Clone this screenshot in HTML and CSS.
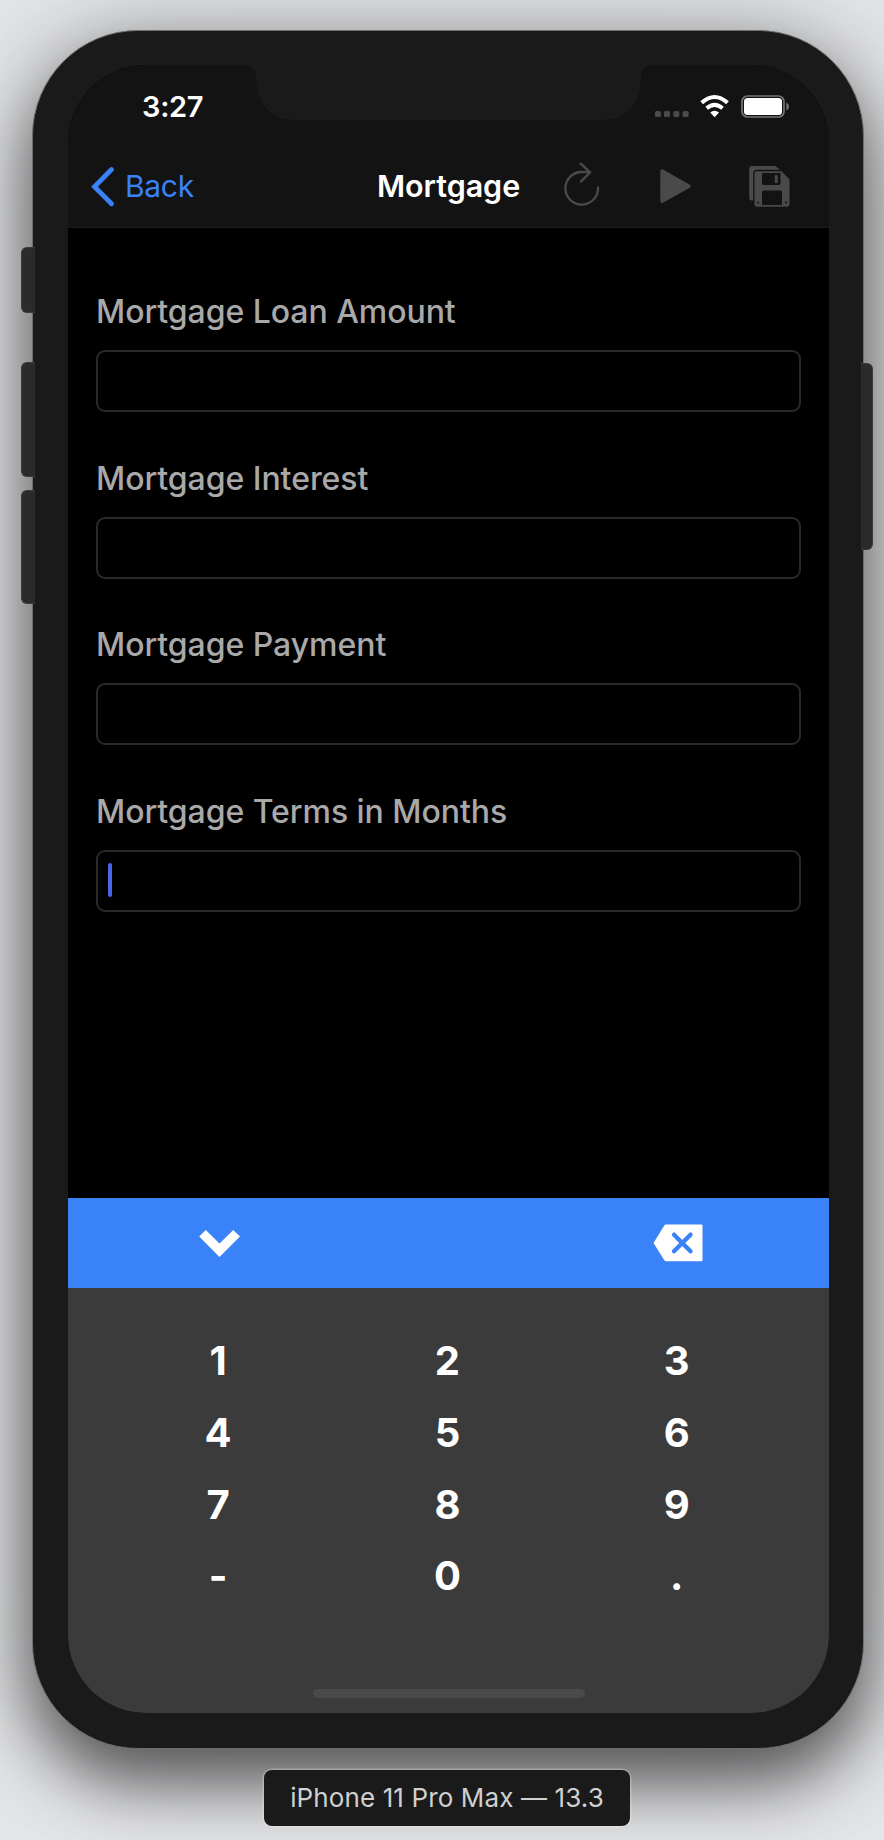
FILE: index.html
```html
<!DOCTYPE html>
<html lang="en">
<head>
<meta charset="utf-8">
<title>Mortgage</title>
<link rel="stylesheet" href="styles.css">
</head>
<body>
<div class="device">
  <span class="side-button mute"></span>
  <span class="side-button volume-up"></span>
  <span class="side-button volume-down"></span>
  <span class="side-button power"></span>
  <main class="screen">
    <svg class="notch" width="409" height="56" viewBox="0 0 409 56"><path d="M0 0C8 0 12 4 12 12C12 40 28 55 52 55H357C381 55 397 40 397 12C397 4 401 0 409 0Z"/></svg>
    <header class="top">
      <div class="status">
        <span class="time">3:27</span>
        <svg class="status-icons" width="136" height="26" viewBox="654 93 136 26">
          <g fill="#4a4a4a"><rect x="655" y="111" width="6" height="6" rx="1.5"/><rect x="664" y="111" width="6" height="6" rx="1.5"/><rect x="673.3" y="111" width="6" height="6" rx="1.5"/><rect x="682.6" y="111" width="6" height="6" rx="1.5"/></g>
          <g fill="none" stroke="#fff" stroke-width="4"><path d="M701.7 102.8Q714.6 91.2 727.5 102.8"/><path d="M706.7 108.2Q714.6 101.4 722.5 108.2"/></g>
          <path d="M710.2 112.6Q714.6 109 719 112.6L714.6 117.2Z" fill="#fff"/>
          <rect x="742" y="96" width="42" height="21" rx="5.5" fill="none" stroke="#777" stroke-width="1.7"/>
          <rect x="744" y="98" width="38" height="17" rx="3.5" fill="#fff"/>
          <path d="M786.3 102.5Q789 103.5 789 106.5T786.3 110.5Z" fill="#777"/>
        </svg>
      </div>
      <nav class="nav">
        <a class="back">
          <svg width="24" height="42" viewBox="91 166 24 42"><path d="M111.5 169.5L94.5 186.7L111.5 203.7" fill="none" stroke="#3a82f7" stroke-width="4.8" stroke-linecap="round"/></svg>
          <span class="back-text">Back</span>
        </a>
        <h1 class="title">Mortgage</h1>
        <svg class="tool reload" width="38" height="50" viewBox="563 162 38 50"><path d="M598 187.5A16.3 16.3 0 1 1 581.7 172H590M580.8 163.6L590.2 172.4L580.8 181.6" fill="none" stroke="#4a4a4a" stroke-width="2.3" stroke-linecap="round" stroke-linejoin="round"/></svg>
        <svg class="tool play" width="32" height="50" viewBox="660 162 32 50"><path d="M662 171V201.3L689 186.2Z" fill="#4a4a4a" stroke="#4a4a4a" stroke-width="3.4" stroke-linejoin="round"/></svg>
        <svg class="tool save" width="42" height="50" viewBox="749 162 42 50">
          <path d="M751.5 166H775.5L780 169.8H757Q753.2 169.8 753.2 174V200.4H751.2Q749.2 200.4 749.2 198V168.5Q749.2 166 751.5 166Z" fill="#4a4a4a"/>
          <path fill-rule="evenodd" d="M756.5 171.3H781.5L789.5 179.5V204.5Q789.5 206.7 787 206.7H756.7Q754.5 206.7 754.5 204.5V173.5Q754.5 171.3 756.5 171.3ZM762 173V183.5Q762 185 763.5 185H779Q780.5 185 780.5 183.5V173ZM763.5 190.5Q762 190.5 762 192V205H782V192Q782 190.5 780.5 190.5Z" fill="#4a4a4a"/>
          <rect x="774.8" y="175" width="3" height="8" rx=".8" fill="#4a4a4a"/>
          <g fill="#131313"><circle cx="758" cy="202.5" r="1.1"/><circle cx="786" cy="202.5" r="1.1"/></g>
        </svg>
      </nav>
    </header>
    <section class="form">
      <label class="field"><span class="field-label">Mortgage Loan Amount</span><span class="input"></span></label>
      <label class="field"><span class="field-label">Mortgage Interest</span><span class="input"></span></label>
      <label class="field"><span class="field-label">Mortgage Payment</span><span class="input"></span></label>
      <label class="field"><span class="field-label">Mortgage Terms in Months</span><span class="input"><i class="caret"></i></span></label>
    </section>
    <section class="keyboard">
      <div class="accessory">
        <svg width="42" height="30" viewBox="198 1228 42 30"><path d="M205.8 1230L219.5 1243.6L233.3 1230L240 1236.5L219.5 1257L199.2 1236.5Z" fill="#fff"/></svg>
        <svg width="50" height="38" viewBox="652.5 1224.5 50 38"><path d="M665 1225H701Q702 1225 702 1226V1260.7Q702 1261.7 701 1261.7H665Q664 1261.3 663.5 1260.3L653 1243.5L663.5 1226.5Q664 1225.3 665 1225Z" fill="#fff"/><path d="M673.5 1235.2L690 1251.7M690 1235.2L673.5 1251.7" stroke="#3a82f7" stroke-width="4.4" stroke-linecap="round"/></svg>
      </div>
      <div class="keys">
        <span>1</span><span>2</span><span>3</span>
        <span>4</span><span>5</span><span>6</span>
        <span>7</span><span>8</span><span>9</span>
        <span>-</span><span>0</span><span>.</span>
      </div>
      <div class="home-indicator"></div>
    </section>
  </main>
</div>
<div class="caption"><span>iPhone 11 Pro Max — 13.3</span></div>
</body>
</html>
```
FILE: styles.css
```css
* { box-sizing: border-box; }
html { background: #e4e5e7; }
body {
  margin: 0;
  width: 884px;
  height: 1840px;
  padding: 30px 0 0 32px;
  overflow: hidden;
  font-family: Inter, "Liberation Sans", sans-serif;
  color: #fff;
}
.device {
  position: relative;
  width: 832px;
  height: 1719px;
  padding: 34px 35px 34px 35px;
  border: 1px solid #6e6f70;
  border-radius: 106px;
  background: #1a1a1a;
  box-shadow: 0 34px 64px rgba(0, 0, 0, .52), 0 10px 100px rgba(0, 0, 0, .3);
}
.side-button {
  position: absolute;
  left: -12px;
  width: 14px;
  border: 1px solid #3b3b3b;
  border-right: 0;
  border-radius: 6px 0 0 6px;
  background: #2b2b2b;
}
.mute { top: 216px; height: 66px; }
.volume-up { top: 331px; height: 115px; }
.volume-down { top: 459px; height: 114px; }
.power {
  left: auto;
  right: -10px;
  top: 332px;
  width: 12px;
  height: 187px;
  border: 1px solid #3b3b3b;
  border-left: 0;
  border-radius: 0 6px 6px 0;
}
.screen {
  position: relative;
  display: flex;
  flex-direction: column;
  width: 761px;
  height: 1648px;
  border-radius: 78px;
  overflow: hidden;
  background: #000;
}
.notch {
  position: absolute;
  left: 176px;
  top: 0;
  fill: #1a1a1a;
}
.top {
  height: 163px;
  background: #131313;
  border-bottom: 1px solid #1c1c1c;
}
.status {
  display: flex;
  justify-content: space-between;
  height: 81px;
  padding: 28px 39px 0 74px;
}
.time { font-size: 29px; font-weight: 600; line-height: 28px; letter-spacing: -.3px; }
.nav { display: flex; align-items: center; height: 81px; padding-left: 23px; }
.back { display: flex; align-items: center; width: 286px; color: #3a82f7; font-size: 30px; }
.back-text { margin-left: 10px; padding-bottom: 2px; letter-spacing: -.3px; }
.title { margin: 0; width: 186px; padding-bottom: 2px; font-size: 30.5px; font-weight: 600; letter-spacing: -.05px; }
.tool { flex: none; }
.play { margin-left: 59px; }
.save { margin-left: 57px; }
.form { padding: 65px 28px 0; }
.field { display: block; height: 166.7px; }
.field-label {
  display: block;
  height: 57px;
  font-size: 32px;
  font-weight: 450;
  line-height: 37px;
  color: #a9a9a9;
  white-space: nowrap;
  letter-spacing: -.05px;
}
.input { display: flex; align-items: center; width: 705px; height: 62px; padding: 0 0 2px 10px; border: 2px solid #292929; border-radius: 9px; }
.caret { width: 4px; height: 34px; border-radius: 2px; background: #4a66e8; }
.keyboard { margin-top: auto; height: 515px; background: #3b3b3b; }
.accessory { display: flex; justify-content: space-between; align-items: center; height: 90px; padding: 0 126.5px 0 130px; background: #3a82f7; }
.keys {
  display: grid;
  grid-template-columns: repeat(3, 229.3px);
  grid-auto-rows: 71.8px;
  padding: 37px 0 0 35.5px;
  font-size: 40px;
  font-weight: 750;
  line-height: 71.8px;
  text-align: center;
}
.home-indicator { width: 272px; height: 9px; margin: 76.6px auto 0; border-radius: 5px; background: #4a4a4a; }
.caption {
  position: relative;
  display: flex;
  align-items: center;
  justify-content: center;
  width: 366px;
  height: 56px;
  margin: 21px 0 0 232px;
  padding-bottom: 2px;
  border-radius: 8px;
  background: #1a1a1a;
  box-shadow: 0 0 0 1.5px rgba(255, 255, 255, .25);
  color: #d0d0d0;
  font-size: 26px;
  letter-spacing: .12px;
  white-space: nowrap;
}
```
